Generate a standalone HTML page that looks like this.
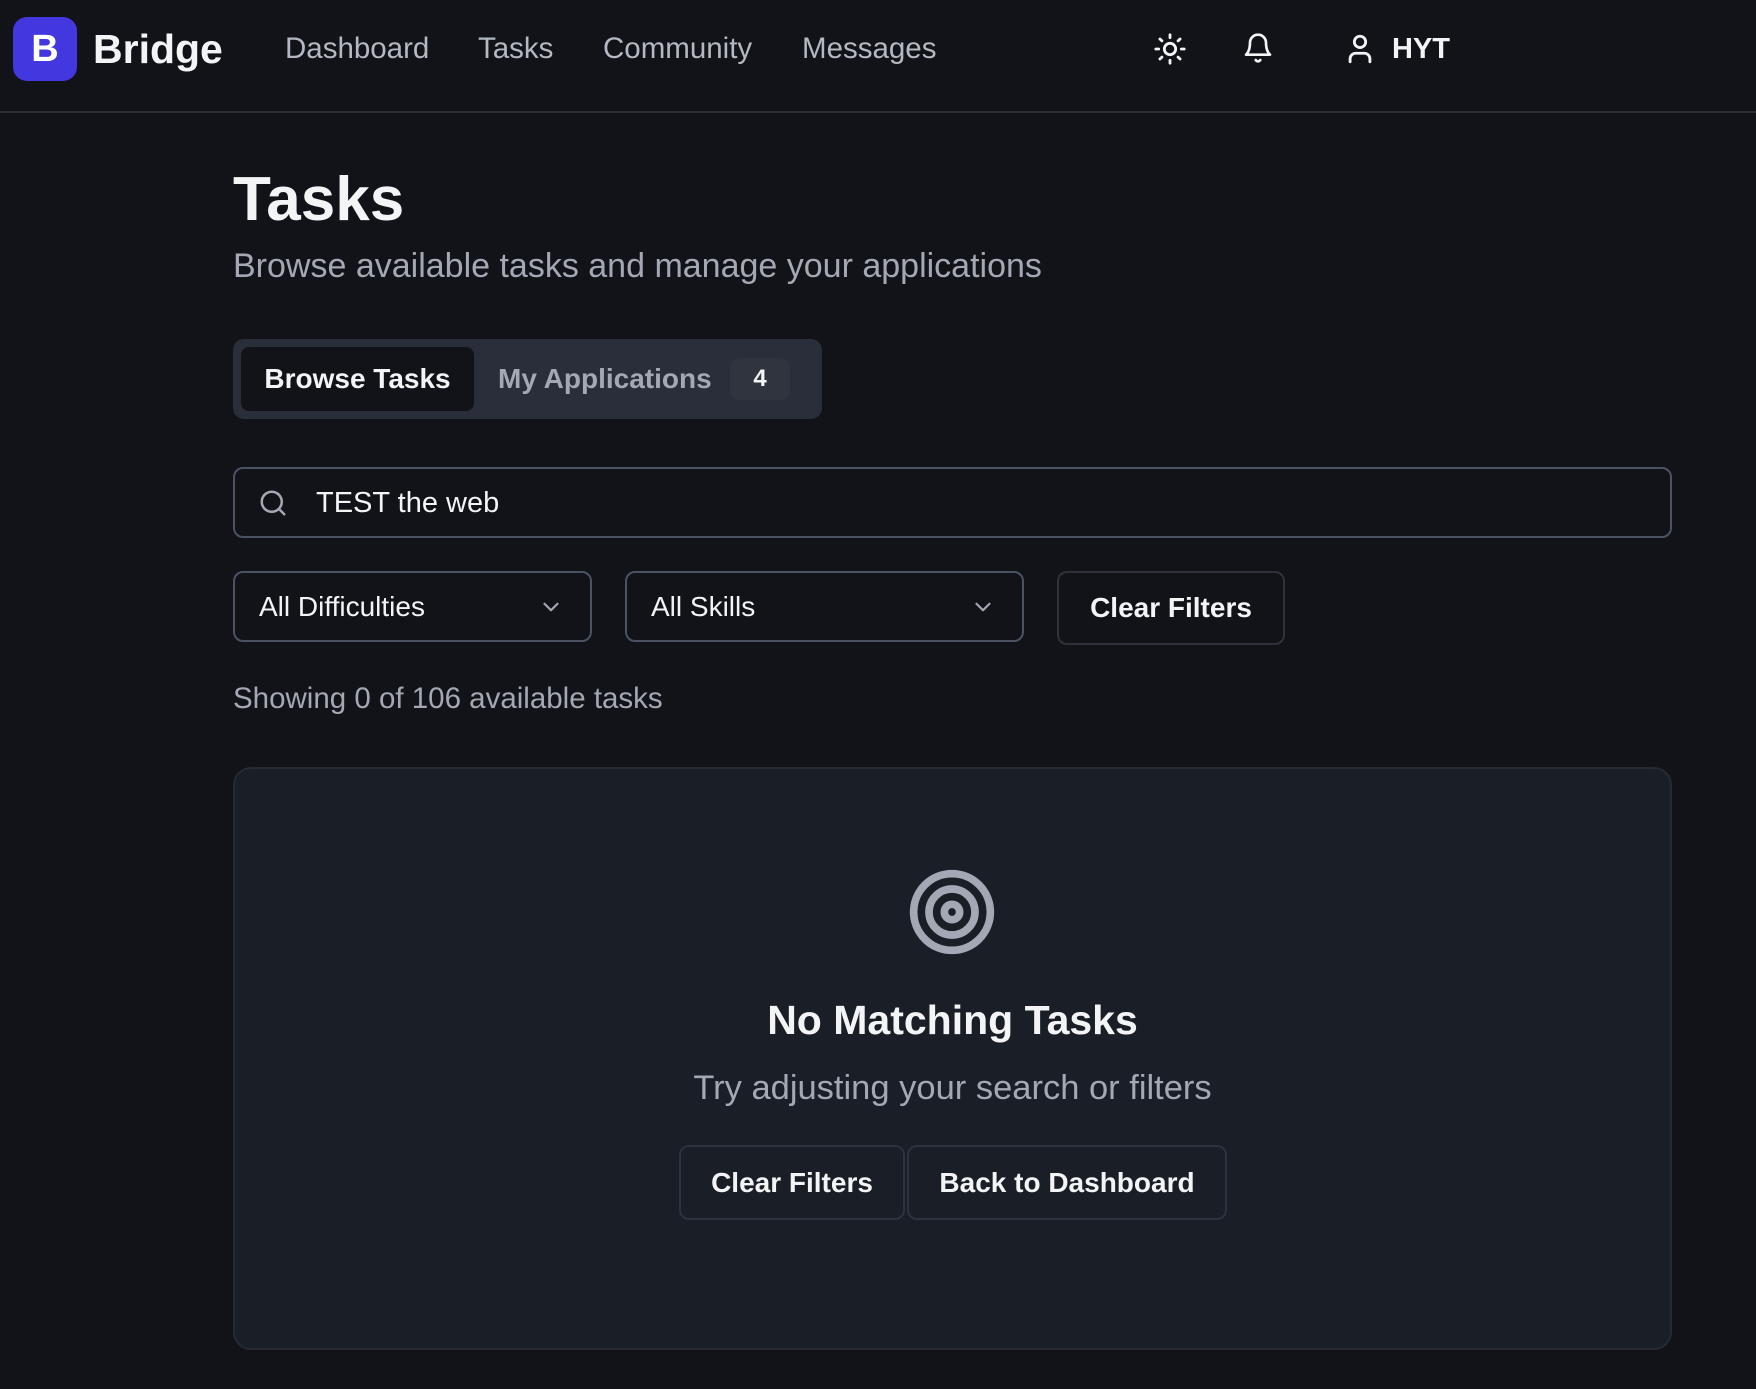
<!DOCTYPE html>
<html><head><meta charset="utf-8">
<style>
*{box-sizing:border-box;margin:0;padding:0}
html,body{width:1756px;height:1389px;overflow:hidden;background:#111318;font-family:"Liberation Sans",sans-serif;color:#f3f4f6}
.abs{position:absolute}
.nav{position:absolute;left:0;top:0;width:1756px;height:113px;border-bottom:2px solid #2a2d38}
.logo{left:13px;top:17px;width:64px;height:64px;border-radius:14px;background:#4338e0;color:#fff;font-weight:bold;font-size:38px;display:flex;align-items:center;justify-content:center}
.brand{left:93px;top:22px;font-weight:bold;font-size:41px;line-height:54px;color:#f3f4f6}
.link{top:30px;font-size:29.5px;line-height:38px;color:#b3b8c2}
.title{left:233px;top:164px;font-size:62px;font-weight:bold;line-height:72px}
.sub{left:233px;top:245px;font-size:34px;line-height:42px;color:#a3a8b4}
.tabs{left:233px;top:339px;width:589px;height:80px;border-radius:11px;background:#2a2e3a}
.tab1{left:241px;top:347px;width:233px;height:64px;border-radius:8px;background:#111318;font-size:28px;font-weight:bold;display:flex;align-items:center;justify-content:center;color:#f3f4f6}
.tab2{left:498px;top:359px;font-size:28px;line-height:40px;color:#a3a8b4;font-weight:bold}
.badge{left:730px;top:358px;width:60px;height:42px;border-radius:10px;background:#30343f;font-size:24px;font-weight:bold;display:flex;align-items:center;justify-content:center}
.search{left:233px;top:467px;width:1439px;height:71px;border:2px solid #4a5264;border-radius:10px}
.stext{left:316px;top:483px;font-size:29px;line-height:40px;color:#f3f4f6}
.sel{top:571px;height:71px;border:2px solid #4a5264;border-radius:10px;font-size:28px;line-height:67px;padding-left:24px;color:#f3f4f6}
.btn{border:2px solid #2e323c;border-radius:10px;font-size:28px;font-weight:bold;display:flex;align-items:center;justify-content:center;color:#f3f4f6}
.show{left:233px;top:680px;font-size:29.5px;line-height:38px;color:#a3a8b4}
.card{left:233px;top:767px;width:1439px;height:583px;border-radius:18px;background:#1a1e26;border:2px solid #252a33}
.h2{left:233px;width:1439px;top:995px;text-align:center;font-size:41px;font-weight:bold;line-height:50px}
.p{left:233px;width:1439px;top:1067px;text-align:center;font-size:34.5px;line-height:42px;color:#a3a8b4}
</style></head><body>
<div class="nav"></div>
<div class="abs logo">B</div>
<div class="abs brand">Bridge</div>
<div class="abs link" style="left:285px">Dashboard</div>
<div class="abs link" style="left:478px">Tasks</div>
<div class="abs link" style="left:603px">Community</div>
<div class="abs link" style="left:802px">Messages</div>
<svg class="abs" style="left:1153px;top:32px" width="34" height="34" viewBox="0 0 24 24" fill="none" stroke="#f3f4f6" stroke-width="2" stroke-linecap="round"><circle cx="12" cy="12" r="4"/><path d="M12 2v2M12 20v2M4.9 4.9l1.4 1.4M17.7 17.7l1.4 1.4M2 12h2M20 12h2M6.3 17.7l-1.4 1.4M19.1 4.9l-1.4 1.4"/></svg>
<svg class="abs" style="left:1242px;top:31px" width="32" height="34" viewBox="0 0 24 24" fill="none" stroke="#f3f4f6" stroke-width="2" stroke-linecap="round" stroke-linejoin="round"><path d="M6 8a6 6 0 0 1 12 0c0 7 3 9 3 9H3s3-2 3-9"/><path d="M10.3 21a1.94 1.94 0 0 0 3.4 0"/></svg>
<svg class="abs" style="left:1343px;top:32px" width="34" height="34" viewBox="0 0 24 24" fill="none" stroke="#f3f4f6" stroke-width="2" stroke-linecap="round"><circle cx="12" cy="7" r="4"/><path d="M19 21v-2a4 4 0 0 0-4-4H9a4 4 0 0 0-4 4v2"/></svg>
<div class="abs" style="left:1392px;top:30px;font-size:29px;font-weight:bold;line-height:38px">HYT</div>

<div class="abs title">Tasks</div>
<div class="abs sub">Browse available tasks and manage your applications</div>

<div class="abs tabs"></div>
<div class="abs tab1">Browse Tasks</div>
<div class="abs tab2">My Applications</div>
<div class="abs badge">4</div>

<div class="abs search"></div>
<svg class="abs" style="left:258px;top:488px" width="30" height="30" viewBox="0 0 24 24" fill="none" stroke="#a3a8b4" stroke-width="2" stroke-linecap="round"><circle cx="11" cy="11" r="8"/><path d="M21 21l-4.3-4.3"/></svg>
<div class="abs stext">TEST the web</div>

<div class="abs sel" style="left:233px;width:359px">All Difficulties</div>
<svg class="abs" style="left:538px;top:594px" width="26" height="26" viewBox="0 0 24 24" fill="none" stroke="#a3a8b4" stroke-width="2" stroke-linecap="round" stroke-linejoin="round"><path d="M6 9l6 6 6-6"/></svg>
<div class="abs sel" style="left:625px;width:399px">All Skills</div>
<svg class="abs" style="left:970px;top:594px" width="26" height="26" viewBox="0 0 24 24" fill="none" stroke="#a3a8b4" stroke-width="2" stroke-linecap="round" stroke-linejoin="round"><path d="M6 9l6 6 6-6"/></svg>
<div class="abs btn" style="left:1057px;top:571px;width:228px;height:74px">Clear Filters</div>

<div class="abs show">Showing 0 of 106 available tasks</div>

<div class="abs card"></div>
<svg class="abs" style="left:906px;top:866px" width="92" height="92" viewBox="0 0 24 24" fill="none" stroke="#a3a8b4" stroke-width="2"><circle cx="12" cy="12" r="10"/><circle cx="12" cy="12" r="6"/><circle cx="12" cy="12" r="2"/></svg>
<div class="abs h2">No Matching Tasks</div>
<div class="abs p">Try adjusting your search or filters</div>
<div class="abs btn" style="left:679px;top:1145px;width:226px;height:75px">Clear Filters</div>
<div class="abs btn" style="left:907px;top:1145px;width:320px;height:75px">Back to Dashboard</div>
</body></html>
